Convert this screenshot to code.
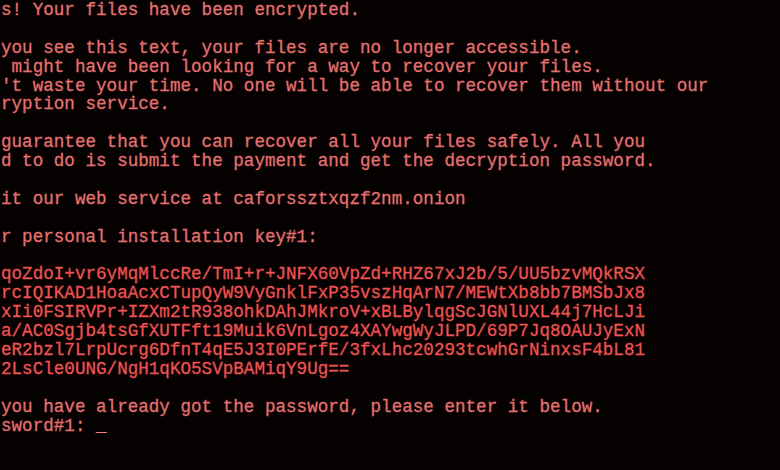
const lines = [
  's! Your files have been encrypted.',
  '',
  'you see this text, your files are no longer accessible.',
  ' might have been looking for a way to recover your files.',
  "'t waste your time. No one will be able to recover them without our",
  'ryption service.',
  '',
  'guarantee that you can recover all your files safely. All you',
  'd to do is submit the payment and get the decryption password.',
  '',
  'it our web service at caforssztxqzf2nm.onion',
  '',
  'r personal installation key#1:',
  '',
];

const keyLines = [
  'qoZdoI+vr6yMqMlccRe/TmI+r+JNFX60VpZd+RHZ67xJ2b/5/UU5bzvMQkRSX',
  'rcIQIKAD1HoaAcxCTupQyW9VyGnklFxP35vszHqArN7/MEWtXb8bb7BMSbJx8',
  'xIi0FSIRVPr+IZXm2tR938ohkDAhJMkroV+xBLBylqgScJGNlUXL44j7HcLJi',
  'a/AC0Sgjb4tsGfXUTFft19Muik6VnLgoz4XAYwgWyJLPD/69P7Jq8OAUJyExN',
  'eR2bzl7LrpUcrg6DfnT4qE5J3I0PErfE/3fxLhc20293tcwhGrNinxsF4bL81',
  '2LsCle0UNG/NgH1qKO5SVpBAMiqY9Ug==',
];

const App = () => {
  return (
    <div className="w-[780px] h-[470px] overflow-hidden bg-[#050101]">
      <div
        className="whitespace-pre text-[17.6px] leading-[18.9px] text-[#e57070] pl-px pt-px [-webkit-text-stroke:0.3px_currentColor]"
        style={{ fontFamily: '"Liberation Mono", "DejaVu Sans Mono", monospace' }}
      >
        {lines.map((line, i) => (
          <div key={i} className="h-[18.9px]">{line}</div>
        ))}
        {keyLines.map((line, i) => (
          <div key={'k' + i} className="h-[18.9px] text-[#ee5252]">{line}</div>
        ))}
        <div className="h-[18.9px]"></div>
        <div className="h-[18.9px]">you have already got the password, please enter it below.</div>
        <div className="h-[18.9px]">
          sword#1: <span className="text-[#f08080]">_</span>
        </div>
      </div>
    </div>
  );
};

export default App;
